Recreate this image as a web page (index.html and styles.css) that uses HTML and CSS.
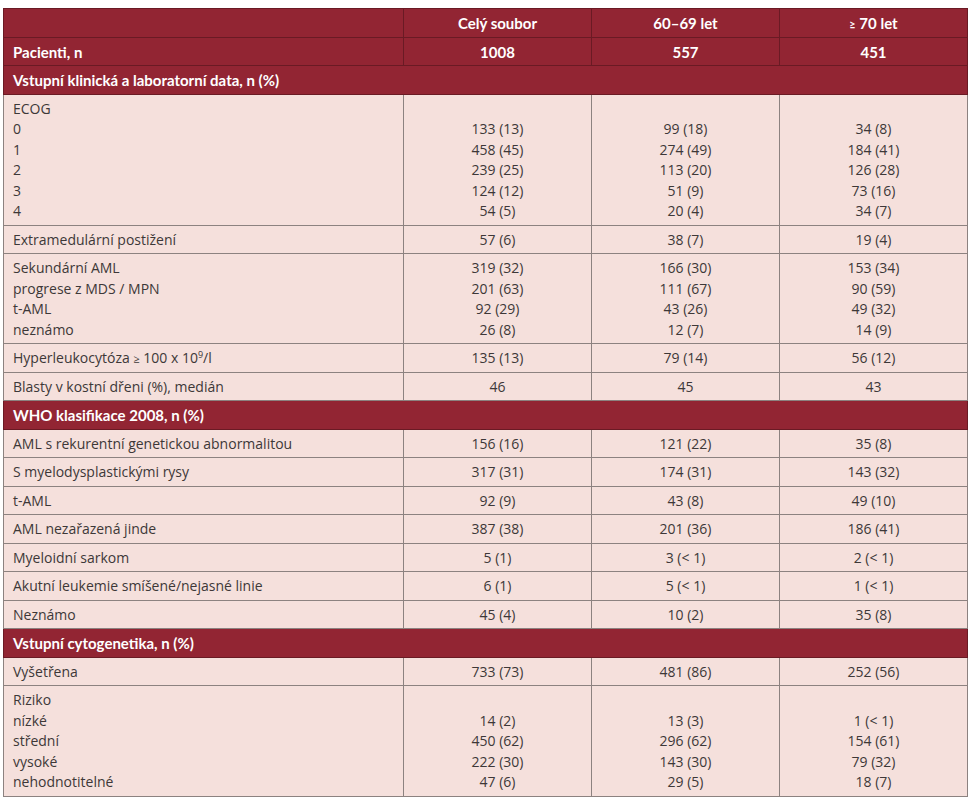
FILE: index.html
```html
<!DOCTYPE html>
<html lang="cs">
<head>
    <meta charset="UTF-8">
    <title>Charakteristika pacientů</title>
    <link rel="stylesheet" href="styles.css">
</head>
<body>
    <table class="data">
        <colgroup>
            <col class="c-label">
            <col class="c-val">
            <col class="c-val">
            <col class="c-val">
        </colgroup>
        <thead>
            <tr class="head">
                <th></th>
                <th>Celý soubor</th>
                <th>60–69 let</th>
                <th><span class="ge">≥</span> 70 let</th>
            </tr>
            <tr class="head">
                <th class="lbl">Pacienti, n</th>
                <th>1008</th>
                <th>557</th>
                <th>451</th>
            </tr>
        </thead>
        <tbody>
            <tr class="section"><td colspan="4">Vstupní klinická a laboratorní data, n (%)</td></tr>
            <tr>
                <td>ECOG<br>0<br>1<br>2<br>3<br>4</td>
                <td>&nbsp;<br>133 (13)<br>458 (45)<br>239 (25)<br>124 (12)<br>54 (5)</td>
                <td>&nbsp;<br>99 (18)<br>274 (49)<br>113 (20)<br>51 (9)<br>20 (4)</td>
                <td>&nbsp;<br>34 (8)<br>184 (41)<br>126 (28)<br>73 (16)<br>34 (7)</td>
            </tr>
            <tr>
                <td>Extramedulární postižení</td>
                <td>57 (6)</td><td>38 (7)</td><td>19 (4)</td>
            </tr>
            <tr>
                <td>Sekundární AML<br>progrese z MDS / MPN<br>t-AML<br>neznámo</td>
                <td>319 (32)<br>201 (63)<br>92 (29)<br>26 (8)</td>
                <td>166 (30)<br>111 (67)<br>43 (26)<br>12 (7)</td>
                <td>153 (34)<br>90 (59)<br>49 (32)<br>14 (9)</td>
            </tr>
            <tr>
                <td>Hyperleukocytóza <span class="ge">≥</span> 100 x 10<sup>9</sup>/l</td>
                <td>135 (13)</td><td>79 (14)</td><td>56 (12)</td>
            </tr>
            <tr>
                <td>Blasty v kostní dřeni (%), medián</td>
                <td>46</td><td>45</td><td>43</td>
            </tr>
            <tr class="section"><td colspan="4">WHO klasifikace 2008, n (%)</td></tr>
            <tr>
                <td>AML s rekurentní genetickou abnormalitou</td>
                <td>156 (16)</td><td>121 (22)</td><td>35 (8)</td>
            </tr>
            <tr>
                <td>S myelodysplastickými rysy</td>
                <td>317 (31)</td><td>174 (31)</td><td>143 (32)</td>
            </tr>
            <tr>
                <td>t-AML</td>
                <td>92 (9)</td><td>43 (8)</td><td>49 (10)</td>
            </tr>
            <tr>
                <td>AML nezařazená jinde</td>
                <td>387 (38)</td><td>201 (36)</td><td>186 (41)</td>
            </tr>
            <tr>
                <td>Myeloidní sarkom</td>
                <td>5 (1)</td><td>3 (&lt; 1)</td><td>2 (&lt; 1)</td>
            </tr>
            <tr>
                <td>Akutní leukemie smíšené/nejasné linie</td>
                <td>6 (1)</td><td>5 (&lt; 1)</td><td>1 (&lt; 1)</td>
            </tr>
            <tr>
                <td>Neznámo</td>
                <td>45 (4)</td><td>10 (2)</td><td>35 (8)</td>
            </tr>
            <tr class="section"><td colspan="4">Vstupní cytogenetika, n (%)</td></tr>
            <tr>
                <td>Vyšetřena</td>
                <td>733 (73)</td><td>481 (86)</td><td>252 (56)</td>
            </tr>
            <tr>
                <td>Riziko<br>nízké<br>střední<br>vysoké<br>nehodnotitelné</td>
                <td>&nbsp;<br>14 (2)<br>450 (62)<br>222 (30)<br>47 (6)</td>
                <td>&nbsp;<br>13 (3)<br>296 (62)<br>143 (30)<br>29 (5)</td>
                <td>&nbsp;<br>1 (&lt; 1)<br>154 (61)<br>79 (32)<br>18 (7)</td>
            </tr>
        </tbody>
    </table>
</body>
</html>
```

FILE: styles.css
```css
body {
    margin: 0;
    background: #fff;
    font-family: "Open Sans", "Liberation Sans", sans-serif;
}
.data {
    width: 965px;
    margin: 8px 0 0 3px;
    border-collapse: collapse;
    table-layout: fixed;
    font-size: 14px;
    line-height: 20.5px;
    color: #3d3838;
}
.c-label {
    width: 400px;
}
.data td,
.data th {
    padding: 4px 9px 3px;
    border: 1px solid #8c8280;
    vertical-align: top;
}
.data td + td {
    text-align: center;
}
/* 红色表头 */
.head th,
.section td {
    background: #922533;
    color: #fff;
    font-family: Lato, "Liberation Sans", sans-serif;
    font-size: 15px;
    font-weight: 700;
    border-color: #6a1a24;
}
.head th {
    text-align: center;
}
.head th.lbl {
    text-align: left;
}
tbody td {
    background: #f5e0dc;
}
.ge {
    font-size: 11px;
    line-height: 0;
}
sup {
    font-size: 9px;
    line-height: 0;
    vertical-align: 5px;
}
```
